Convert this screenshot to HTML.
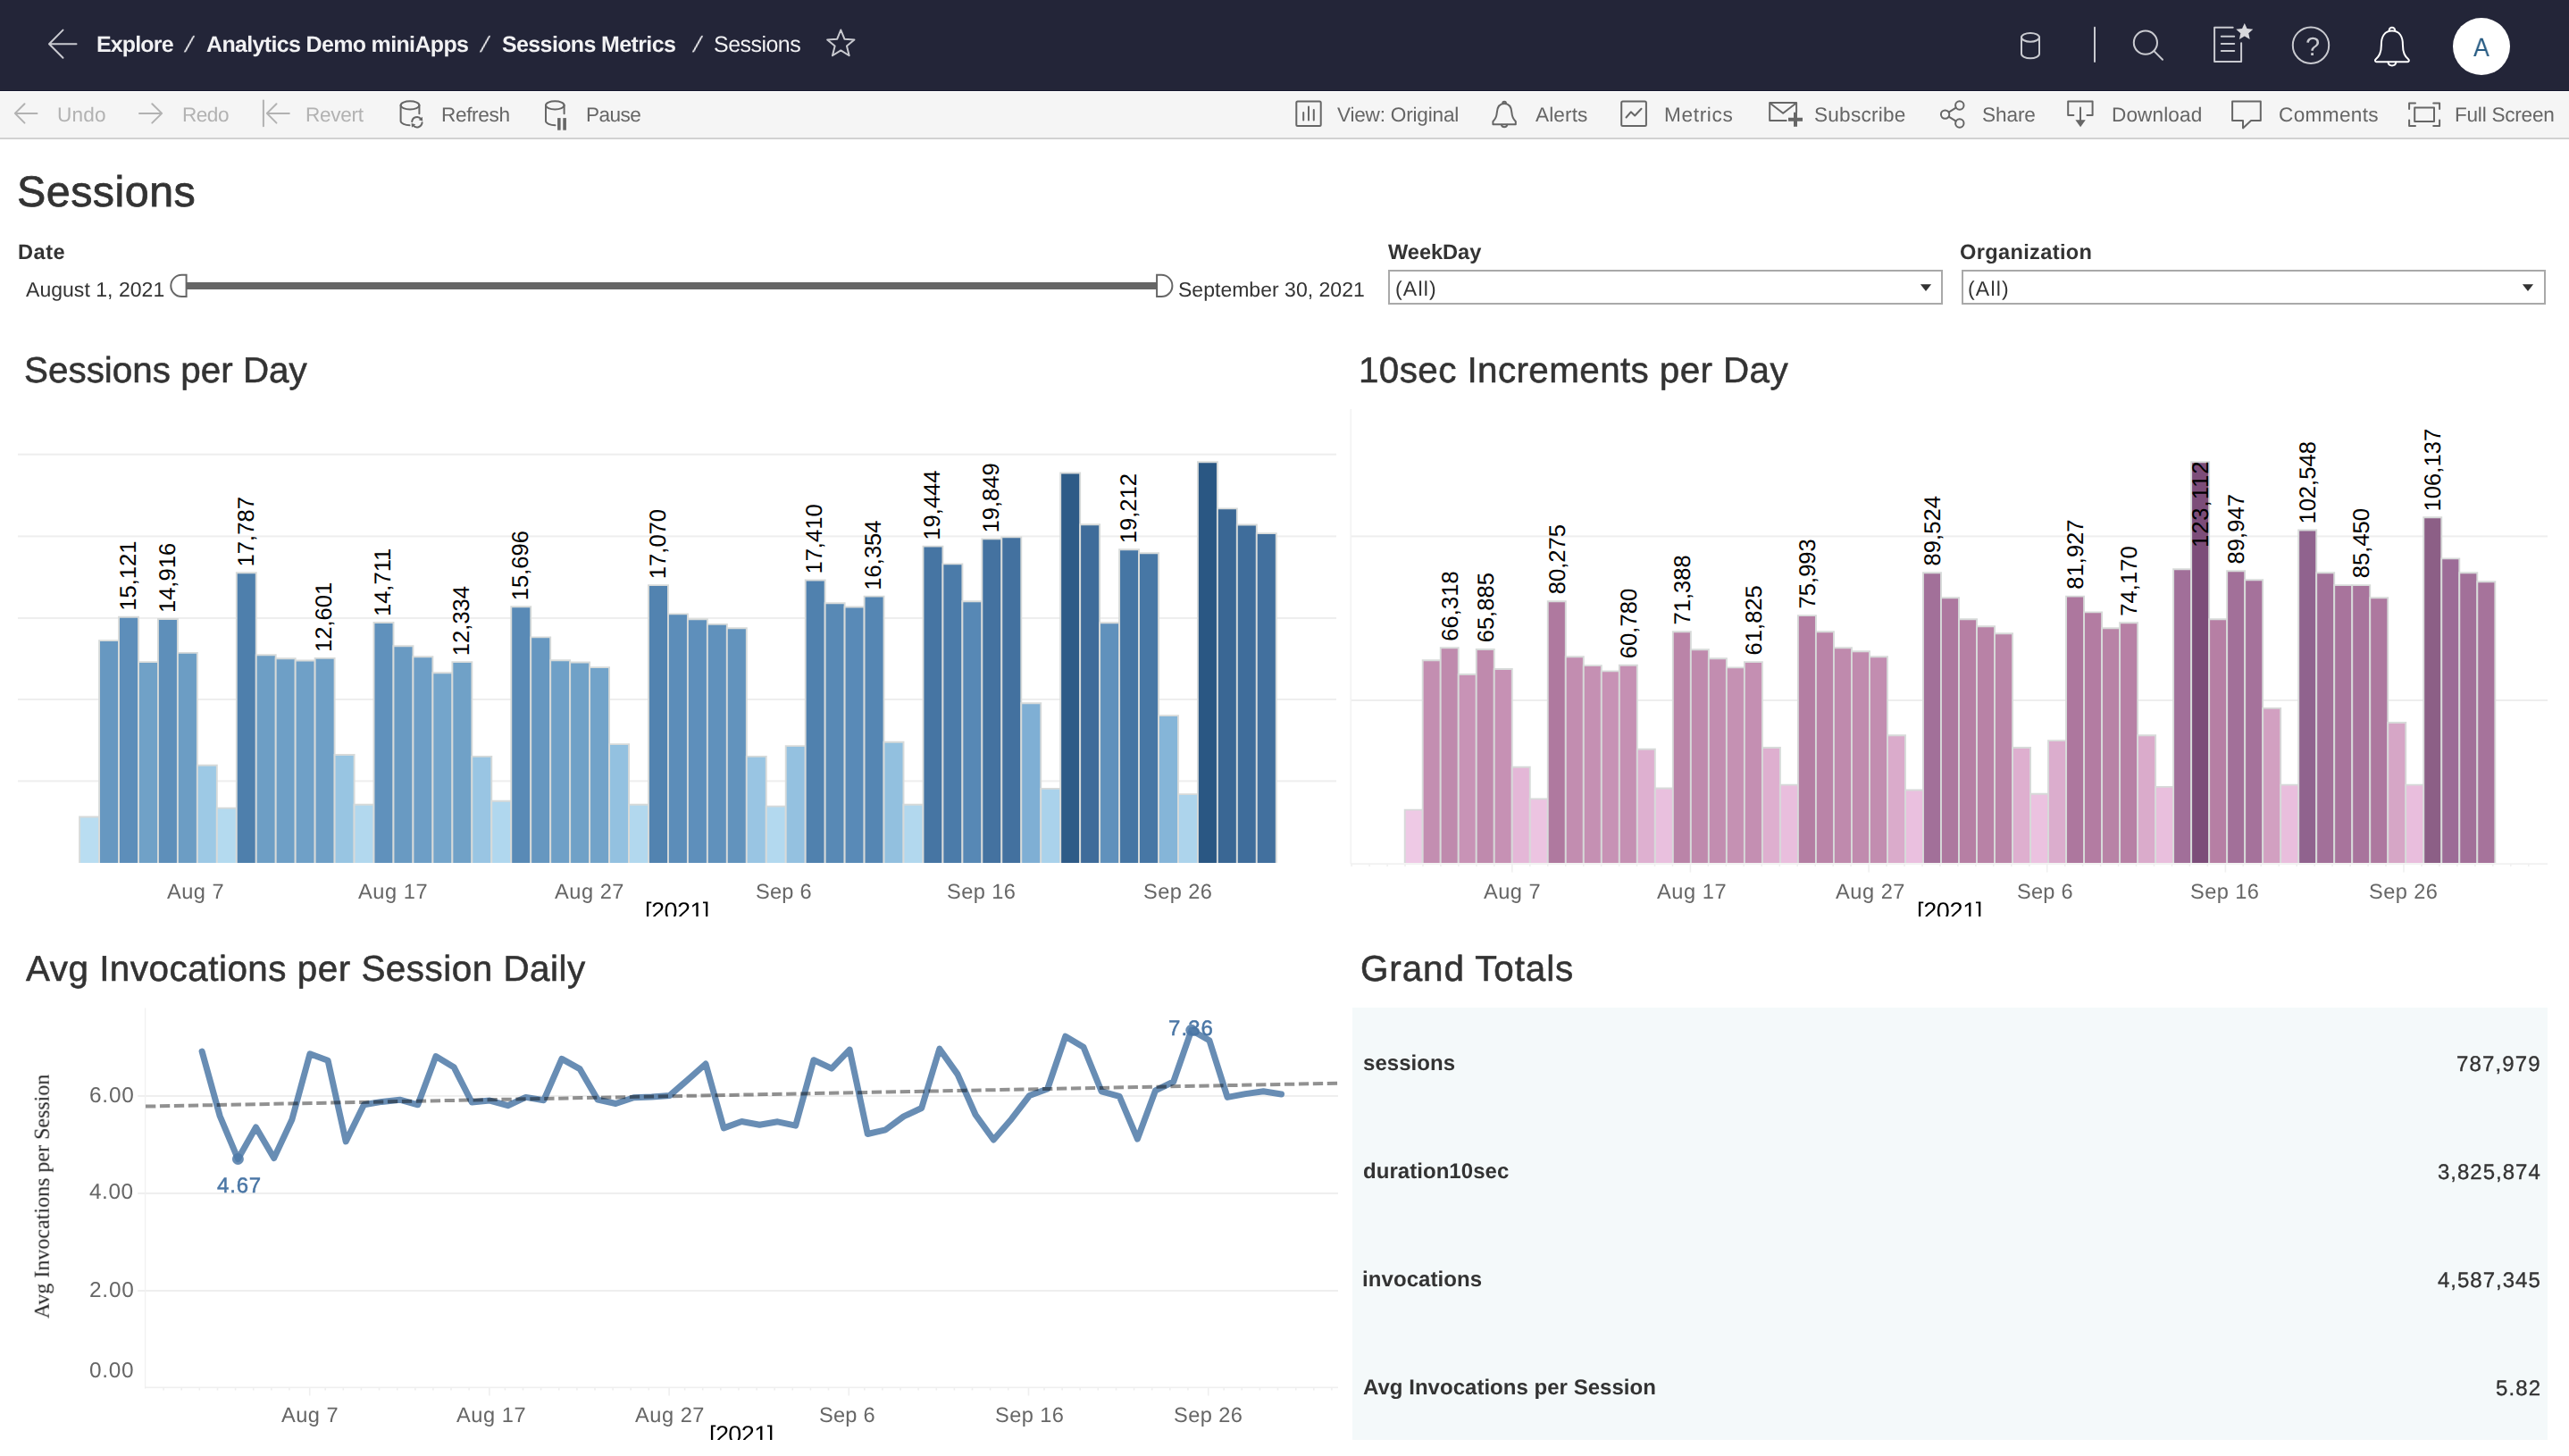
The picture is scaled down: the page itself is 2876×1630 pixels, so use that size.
<!DOCTYPE html>
<html lang="en"><head><meta charset="utf-8"><title>Sessions</title>
<style>
html,body{margin:0;padding:0;background:#fff;}
body{width:2876px;height:1630px;position:relative;overflow:hidden;font-family:"Liberation Sans",sans-serif;text-rendering:geometricPrecision;}
.t{position:absolute;white-space:nowrap;line-height:1;will-change:transform;}
.r{position:absolute;display:block;}
svg{overflow:visible;}
</style></head><body>
<div class="r" style="left:0.00px;top:0.00px;width:2876.00px;height:101.00px;background:#232538;"></div>
<div class="r" style="left:0.00px;top:100.70px;width:2876.00px;height:1.30px;background:#191b31;"></div>
<div class="r" style="left:0.00px;top:102.00px;width:2876.00px;height:1.20px;background:#ffffff;"></div>
<div class="r" style="left:0.00px;top:103.20px;width:2876.00px;height:51.00px;background:#f5f5f5;"></div>
<div class="r" style="left:0.00px;top:154.00px;width:2876.00px;height:2.00px;background:#d1d1d1;"></div>
<svg class="r" style="left:0.00px;top:0.00px;" width="1000.00" height="102.00" viewBox="0.00 0.00 1000.00 102.00">
<g fill="none" stroke="#c9cad0" stroke-width="2" stroke-linecap="round" stroke-linejoin="round">
<path d="M85.5 49.2H55.5M70.5 33.6L55 49.2L70.5 64.8"/>
<path d="M941.30 33.50L945.41 43.74L956.42 44.49L947.96 51.56L950.65 62.26L941.30 56.40L931.95 62.26L934.64 51.56L926.18 44.49L937.19 43.74z"/>
</g></svg>
<div class="t" style="left:107.50px;top:38.00px;font-size:25.00px;color:#f1f1f3;font-weight:700;letter-spacing:-0.858px;">Explore</div>
<div class="t" style="left:230.70px;top:38.00px;font-size:25.00px;color:#f1f1f3;font-weight:700;letter-spacing:-0.659px;">Analytics Demo miniApps</div>
<div class="t" style="left:561.55px;top:38.00px;font-size:25.00px;color:#f1f1f3;font-weight:700;letter-spacing:-0.627px;">Sessions Metrics</div>
<div class="t" style="left:799.05px;top:38.00px;font-size:25.00px;color:#f1f1f3;letter-spacing:-0.529px;">Sessions</div>
<div class="t" style="left:206.30px;top:38.00px;font-size:25px;color:#f1f1f3;transform:skewX(-16deg);transform-origin:0 20.0px;">/</div>
<div class="t" style="left:537.00px;top:38.00px;font-size:25px;color:#f1f1f3;transform:skewX(-16deg);transform-origin:0 20.0px;">/</div>
<div class="t" style="left:774.60px;top:38.00px;font-size:25px;color:#f1f1f3;transform:skewX(-16deg);transform-origin:0 20.0px;">/</div>
<svg class="r" style="left:2200.00px;top:0.00px;" width="676.00" height="102.00" viewBox="2200.00 0.00 676.00 102.00">
<g fill="none" stroke="#c9cad0" stroke-width="2" stroke-linecap="round" stroke-linejoin="round">
<path d="M2263 41.800v18.500c0 2.700 4.500 5 10 5s10-2.300 10-5v-18.500"/>
<ellipse cx="2273" cy="41.800" rx="10" ry="4.900"/>
<path d="M2345 30.800V69"/>
<circle cx="2401.9" cy="47.700" r="13.100"/><path d="M2411.400 57.100L2421 66.700"/>
<path d="M2499.700 30.800H2479.100V68.900H2509.100V48.200"/>
<path d="M2486.800 40.800H2501.200M2486.800 49H2501.200M2486.800 57H2501.200"/>
<circle cx="2587" cy="50.700" r="20.200"/>
</g>
<path fill="#d8d8dc" d="M2512.80 25.90L2515.56 32.10L2522.31 32.81L2517.27 37.35L2518.68 43.99L2512.80 40.60L2506.92 43.99L2508.33 37.35L2503.29 32.81L2510.04 32.10z"/>
<g fill="none" stroke="#ffffff" stroke-width="2" stroke-linecap="round" stroke-linejoin="round">
<path d="M2677.9 34.4c-8.6 0-12 7-12 15.500c0 9.500-2.600 13.200-6.400 16.700c-1 .9-.6 2.600 1 2.600h34.800c1.600 0 2-1.700 1-2.600c-3.800-3.500-6.400-7.200-6.400-16.700c0-8.500-3.400-15.500-12-15.500z"/>
<path d="M2674.6 34.300c0-2 1.400-3.600 3.300-3.600s3.300 1.600 3.300 3.600"/>
<path d="M2673.400 69.600c.4 2.300 2.200 3.800 4.500 3.800s4.100-1.500 4.500-3.800"/>
</g>
<circle cx="2778" cy="52" r="32" fill="#ffffff"/>
</svg>
<div class="t" style="left:2580.85px;top:39.00px;font-size:29.00px;color:#c9cad0;">?</div>
<div class="t" style="left:2769.20px;top:39.00px;font-size:29.40px;color:#265a82;transform:scaleX(0.91);transform-origin:0 0;">A</div>
<div class="t" style="left:63.65px;top:118.00px;font-size:22.60px;color:#b2b2b2;letter-spacing:0.183px;">Undo</div>
<div class="t" style="left:203.75px;top:118.00px;font-size:22.60px;color:#b2b2b2;letter-spacing:-0.517px;">Redo</div>
<div class="t" style="left:341.95px;top:118.00px;font-size:22.60px;color:#b2b2b2;letter-spacing:-0.320px;">Revert</div>
<div class="t" style="left:493.75px;top:118.00px;font-size:22.60px;color:#666666;letter-spacing:-0.350px;">Refresh</div>
<div class="t" style="left:655.75px;top:118.00px;font-size:22.60px;color:#666666;letter-spacing:-0.575px;">Pause</div>
<div class="t" style="left:1496.80px;top:118.00px;font-size:22.60px;color:#666666;letter-spacing:-0.208px;">View: Original</div>
<div class="t" style="left:1719.30px;top:118.00px;font-size:22.60px;color:#666666;letter-spacing:0.130px;">Alerts</div>
<div class="t" style="left:1863.05px;top:118.00px;font-size:22.60px;color:#666666;letter-spacing:0.667px;">Metrics</div>
<div class="t" style="left:2031.40px;top:118.00px;font-size:22.60px;color:#666666;letter-spacing:0.225px;">Subscribe</div>
<div class="t" style="left:2218.80px;top:118.00px;font-size:22.60px;color:#666666;letter-spacing:-0.100px;">Share</div>
<div class="t" style="left:2363.75px;top:118.00px;font-size:22.60px;color:#666666;letter-spacing:0.107px;">Download</div>
<div class="t" style="left:2550.50px;top:118.00px;font-size:22.60px;color:#666666;letter-spacing:0.343px;">Comments</div>
<div class="t" style="left:2747.95px;top:118.00px;font-size:22.60px;color:#666666;letter-spacing:-0.250px;">Full Screen</div>
<svg class="r" style="left:0.00px;top:102.00px;" width="760.00" height="54.00" viewBox="0.00 102.00 760.00 54.00">
<g fill="none" stroke="#b2b2b2" stroke-width="2" stroke-linecap="round" stroke-linejoin="round">
<path d="M41.5 126.9H17M27.5 116.2L16.8 126.9L27.5 137.600"/>
<path d="M156 126.9H181M170.300 116.2L181.200 126.9L170.300 137.600"/>
<path d="M294.9 112.500V141.300"/>
<path d="M323.800 126.9H299M309.500 116.2L298.800 126.9L309.500 137.600"/>
</g>
<g fill="none" stroke="#666666" stroke-width="2" stroke-linecap="round" stroke-linejoin="round">
<ellipse cx="459.0" cy="117.8" rx="10.4" ry="4.6"/><path d="M448.6 117.8V135.6c0 2.6 5.2 4.6 9.9 4.6"/><path d="M469.4 117.8V127.3"/>
<ellipse cx="621.3" cy="117.8" rx="10.3" ry="4.6"/><path d="M611.0 117.8V135.6c0 2.6 5.2 4.6 10.5 4.6"/><path d="M631.6 117.8V127.3"/>
<path d="M461.22 136.20A5.70 5.70 0 0 1 471.39 133.19"/>
<path d="M472.58 137.20A5.70 5.70 0 0 1 462.41 140.21"/>
</g>
<path fill="#666666" d="M473.23 135.38L472.80 130.64L468.64 134.13zM460.57 138.02L461.00 142.76L465.16 139.27z"/>
<rect x="624.1" y="132.100" width="3.500" height="13.600" fill="#666666"/><rect x="630.300" y="132.100" width="3.600" height="13.600" fill="#666666"/>
</svg>
<svg class="r" style="left:1440.00px;top:102.00px;" width="1436.00" height="54.00" viewBox="1440.00 102.00 1436.00 54.00">
<g fill="none" stroke="#666666" stroke-width="2" stroke-linecap="round" stroke-linejoin="round">
<rect x="1451.3" y="113.600" width="27.4" height="27.4" rx="1.5"/>
<path d="M1459.200 134.500V126M1465 134.500V119.500M1470.800 134.500V123"/>
<path d="M1684.100 116.100C1678.600 116.100 1676.200 120.600 1675.800 126C1675.400 131.500 1674.200 133.400 1671.400 135.900V139.200H1696.800V135.900C1694 133.400 1692.800 131.500 1692.400 126C1692 120.600 1689.600 116.100 1684.100 116.100z"/>
<path d="M1682.200 116c0-1.300.8-2.200 1.900-2.200s1.900.9 1.900 2.200"/>
<path d="M1680.900 139.800c.4 1.500 1.600 2.500 3.200 2.500s2.800-1 3.200-2.500"/>
<rect x="1815.200" y="113.600" width="27.700" height="27.400" rx="1.500"/>
<path d="M1820.500 131.500l5.300-6.200 4.400 4.200 7.300-7.700"/>
<path d="M2011.100 125.500V115.100H1981.200V134.900H1999.700"/>
<path d="M1981.600 115.500l14.550 11.300 14.550-11.300"/>
<circle cx="2193.800" cy="118" r="4.700"/><circle cx="2177.600" cy="128.100" r="4.700"/><circle cx="2193.800" cy="138" r="4.700"/>
<path d="M2181.700 125.600l8-5M2181.700 130.600l8 5"/>
<path d="M2321.400 128.900H2315.200V113.500H2342.600V128.900H2336.400"/>
<path d="M2329 120.500V135"/>
<path d="M2499.100 113.600H2530.800V135.100H2520L2511 143.400V135.100H2499.100z"/>
<rect x="2703.200" y="120.500" width="21.800" height="15.600"/>
<path d="M2697.100 122V115.500H2704M2724.200 115.500H2731.100V122M2731.100 134.600V141.100H2724.200M2704 141.100H2697.100V134.600"/>
</g>
<path fill="#666666" d="M2323.400 134.200h11.400l-5.700 8z"/>
<path fill="none" stroke="#666666" stroke-width="4" d="M2010 125.800V141.800M2002 133.800H2018"/>
</svg>
<div class="t" style="left:18.75px;top:191.00px;font-size:48.40px;color:#333333;letter-spacing:0.493px;-webkit-text-stroke:0.8px #333;">Sessions</div>
<div class="t" style="left:20.00px;top:272.00px;font-size:23.60px;color:#333333;font-weight:700;letter-spacing:0.500px;">Date</div>
<div class="t" style="left:1553.60px;top:272.00px;font-size:23.60px;color:#333333;font-weight:700;letter-spacing:-0.033px;">WeekDay</div>
<div class="t" style="left:2194.00px;top:272.00px;font-size:23.60px;color:#333333;font-weight:700;letter-spacing:0.341px;">Organization</div>
<div class="t" style="left:29.20px;top:313.00px;font-size:23.00px;color:#333333;letter-spacing:0.035px;">August 1, 2021</div>
<div class="t" style="left:1319.20px;top:313.00px;font-size:23.00px;color:#333333;letter-spacing:0.018px;">September 30, 2021</div>
<svg class="r" style="left:180.00px;top:300.00px;" width="1150.00" height="40.00" viewBox="180.00 300.00 1150.00 40.00">
<rect x="209" y="316" width="1086" height="8" fill="#666"/>
<path d="M208.600 307.800h-5.200a12.100 12.100 0 0 0 0 24.200h5.200z" fill="#fff" stroke="#666" stroke-width="2"/>
<path d="M1295.100 307.800h5.200a12.100 12.100 0 0 1 0 24.200h-5.200z" fill="#fff" stroke="#666" stroke-width="2"/>
</svg>
<div class="r" style="left:1554.40px;top:302.4px;width:621.10px;height:38.90px;border:2px solid #a9a9a9;box-sizing:border-box;background:#fff"></div>
<div class="t" style="left:1561.75px;top:312.00px;font-size:23.00px;color:#333333;letter-spacing:1.188px;">(All)</div>
<svg class="r" style="left:2147.90px;top:316.00px;" width="16.00" height="12.00" viewBox="2147.90 316.00 16.00 12.00"><path d="M2149.8 318.200h12.200l-6.100 7.900z" fill="#333"/></svg>
<div class="r" style="left:2196.10px;top:302.4px;width:653.60px;height:38.90px;border:2px solid #a9a9a9;box-sizing:border-box;background:#fff"></div>
<div class="t" style="left:2203.45px;top:312.00px;font-size:23.00px;color:#333333;letter-spacing:1.188px;">(All)</div>
<svg class="r" style="left:2822.10px;top:316.00px;" width="16.00" height="12.00" viewBox="2822.10 316.00 16.00 12.00"><path d="M2824.0 318.200h12.200l-6.100 7.900z" fill="#333"/></svg>
<div class="t" style="left:27.45px;top:394.00px;font-size:40.40px;color:#333333;letter-spacing:0.017px;-webkit-text-stroke:0.55px #333;">Sessions per Day</div>
<div class="t" style="left:1521.00px;top:394.00px;font-size:40.40px;color:#333333;letter-spacing:0.402px;-webkit-text-stroke:0.55px #333;">10sec Increments per Day</div>
<div class="t" style="left:29.20px;top:1064.00px;font-size:40.40px;color:#333333;letter-spacing:0.509px;-webkit-text-stroke:0.55px #333;">Avg Invocations per Session Daily</div>
<div class="t" style="left:1522.50px;top:1064.00px;font-size:40.40px;color:#333333;letter-spacing:0.909px;-webkit-text-stroke:0.55px #333;">Grand Totals</div>
<svg class="r" style="left:0.00px;top:440.00px;font-family:&quot;Liberation Sans&quot;,sans-serif;" width="1510.00" height="540.00" viewBox="0.00 440.00 1510.00 540.00"><rect x="20" y="507.7" width="1476" height="2" fill="#eeeeee"/><rect x="20" y="599.4" width="1476" height="2" fill="#eeeeee"/><rect x="20" y="691.0" width="1476" height="2" fill="#eeeeee"/><rect x="20" y="782.0" width="1476" height="2" fill="#eeeeee"/><rect x="20" y="873.4" width="1476" height="2" fill="#eeeeee"/><g stroke="#d7dad9" stroke-width="1.9"><path d="M89.10 966.00V914.50H111.06V966.00" fill="#b9ddf1"/><path d="M111.06 966.00V717.10H133.02V966.00" fill="#6798c1"/><path d="M133.02 966.00V690.70H154.99V966.00" fill="#5d8eba"/><path d="M154.99 966.00V741.10H176.95V966.00" fill="#70a1c7"/><path d="M176.95 966.00V693.00H198.91V966.00" fill="#5e8fba"/><path d="M198.91 966.00V730.90H220.87V966.00" fill="#6c9dc4"/><path d="M220.87 966.00V856.80H242.83V966.00" fill="#9dc9e5"/><path d="M242.83 966.00V904.60H264.80V966.00" fill="#b4daef"/><path d="M264.80 966.00V641.30H286.76V966.00" fill="#4e7fac"/><path d="M286.76 966.00V733.20H308.72V966.00" fill="#6d9ec5"/><path d="M308.72 966.00V737.20H330.68V966.00" fill="#6e9fc6"/><path d="M330.68 966.00V739.50H352.64V966.00" fill="#6fa0c7"/><path d="M352.64 966.00V736.90H374.61V966.00" fill="#6e9fc6"/><path d="M374.61 966.00V845.00H396.57V966.00" fill="#98c5e2"/><path d="M396.57 966.00V900.70H418.53V966.00" fill="#b2d8ee"/><path d="M418.53 966.00V697.00H440.49V966.00" fill="#6091bc"/><path d="M440.49 966.00V723.30H462.45V966.00" fill="#699ac2"/><path d="M462.45 966.00V735.20H484.42V966.00" fill="#6d9ec6"/><path d="M484.42 966.00V753.30H506.38V966.00" fill="#74a5cb"/><path d="M506.38 966.00V741.10H528.34V966.00" fill="#70a1c7"/><path d="M528.34 966.00V846.90H550.30V966.00" fill="#99c5e3"/><path d="M550.30 966.00V896.70H572.26V966.00" fill="#b0d7ee"/><path d="M572.26 966.00V679.20H594.23V966.00" fill="#598ab6"/><path d="M594.23 966.00V713.40H616.19V966.00" fill="#6697c0"/><path d="M616.19 966.00V739.20H638.15V966.00" fill="#6fa0c7"/><path d="M638.15 966.00V741.50H660.11V966.00" fill="#70a1c7"/><path d="M660.11 966.00V747.10H682.07V966.00" fill="#72a3c9"/><path d="M682.07 966.00V833.10H704.04V966.00" fill="#93c1e0"/><path d="M704.04 966.00V900.70H726.00V966.00" fill="#b2d8ee"/><path d="M726.00 966.00V655.10H747.96V966.00" fill="#5283b0"/><path d="M747.96 966.00V687.40H769.92V966.00" fill="#5c8db9"/><path d="M769.92 966.00V693.30H791.88V966.00" fill="#5e8fbb"/><path d="M791.88 966.00V698.90H813.85V966.00" fill="#6091bc"/><path d="M813.85 966.00V703.20H835.81V966.00" fill="#6293bd"/><path d="M835.81 966.00V846.90H857.77V966.00" fill="#99c5e3"/><path d="M857.77 966.00V902.60H879.73V966.00" fill="#b3d9ef"/><path d="M879.73 966.00V835.10H901.69V966.00" fill="#94c1e0"/><path d="M901.69 966.00V649.50H923.66V966.00" fill="#5081ae"/><path d="M923.66 966.00V675.20H945.62V966.00" fill="#5889b5"/><path d="M945.62 966.00V679.50H967.58V966.00" fill="#598ab7"/><path d="M967.58 966.00V667.60H989.54V966.00" fill="#5586b3"/><path d="M989.54 966.00V830.80H1011.50V966.00" fill="#92c0df"/><path d="M1011.50 966.00V900.70H1033.47V966.00" fill="#b2d8ee"/><path d="M1033.47 966.00V611.60H1055.43V966.00" fill="#4675a3"/><path d="M1055.43 966.00V631.40H1077.39V966.00" fill="#4b7ba9"/><path d="M1077.39 966.00V673.20H1099.35V966.00" fill="#5788b5"/><path d="M1099.35 966.00V603.40H1121.31V966.00" fill="#4472a0"/><path d="M1121.31 966.00V601.40H1143.28V966.00" fill="#43719f"/><path d="M1143.28 966.00V787.30H1165.24V966.00" fill="#7fafd4"/><path d="M1165.24 966.00V882.90H1187.20V966.00" fill="#aad2eb"/><path d="M1187.20 966.00V529.50H1209.16V966.00" fill="#2e5b87"/><path d="M1209.16 966.00V587.20H1231.12V966.00" fill="#3f6c9a"/><path d="M1231.12 966.00V697.30H1253.09V966.00" fill="#6091bc"/><path d="M1253.09 966.00V615.20H1275.05V966.00" fill="#4676a4"/><path d="M1275.05 966.00V619.20H1297.01V966.00" fill="#4777a5"/><path d="M1297.01 966.00V801.10H1318.97V966.00" fill="#85b5d8"/><path d="M1318.97 966.00V889.10H1340.93V966.00" fill="#add4ec"/><path d="M1340.93 966.00V517.30H1362.90V966.00" fill="#2a5783"/><path d="M1362.90 966.00V569.40H1384.86V966.00" fill="#3a6794"/><path d="M1384.86 966.00V587.50H1406.82V966.00" fill="#3f6d9b"/><path d="M1406.82 966.00V597.10H1428.78V966.00" fill="#42709e"/></g><g font-size="25.6" fill="#000"><text transform="translate(151.80 683.80) rotate(-90)">15,121</text><text transform="translate(195.73 686.10) rotate(-90)">14,916</text><text transform="translate(283.58 634.40) rotate(-90)">17,787</text><text transform="translate(371.42 730.00) rotate(-90)">12,601</text><text transform="translate(437.31 690.10) rotate(-90)">14,711</text><text transform="translate(525.16 734.20) rotate(-90)">12,334</text><text transform="translate(591.05 672.30) rotate(-90)">15,696</text><text transform="translate(744.78 648.20) rotate(-90)">17,070</text><text transform="translate(920.48 642.60) rotate(-90)">17,410</text><text transform="translate(986.36 660.70) rotate(-90)">16,354</text><text transform="translate(1052.25 604.70) rotate(-90)">19,444</text><text transform="translate(1118.13 596.50) rotate(-90)">19,849</text><text transform="translate(1271.87 608.30) rotate(-90)">19,212</text></g></svg>
<svg class="r" style="left:1505.00px;top:440.00px;font-family:&quot;Liberation Sans&quot;,sans-serif;" width="1371.00" height="540.00" viewBox="1505.00 440.00 1371.00 540.00"><rect x="1512" y="599.4" width="1340" height="2" fill="#eeeeee"/><rect x="1512" y="783.0" width="1340" height="2" fill="#eeeeee"/><rect x="1511.5" y="458" width="1.6" height="509" fill="#f2f2f2"/><rect x="1512" y="966.3" width="1340" height="1.6" fill="#f0f0f0"/><rect x="1512.3" y="967.6" width="1.6" height="2.5" fill="#f0f0f0"/><rect x="1532.3" y="967.6" width="1.6" height="2.5" fill="#f0f0f0"/><rect x="1552.3" y="967.6" width="1.6" height="2.5" fill="#f0f0f0"/><rect x="1572.2" y="967.6" width="1.6" height="2.5" fill="#f0f0f0"/><rect x="1592.2" y="967.6" width="1.6" height="2.5" fill="#f0f0f0"/><rect x="1612.1" y="967.6" width="1.6" height="2.5" fill="#f0f0f0"/><rect x="1632.1" y="967.6" width="1.6" height="2.5" fill="#f0f0f0"/><rect x="1652.1" y="967.6" width="1.6" height="2.5" fill="#f0f0f0"/><rect x="1672.0" y="967.6" width="1.6" height="2.5" fill="#f0f0f0"/><rect x="1692.0" y="967.6" width="1.6" height="9.0" fill="#f0f0f0"/><rect x="1712.0" y="967.6" width="1.6" height="2.5" fill="#f0f0f0"/><rect x="1731.9" y="967.6" width="1.6" height="2.5" fill="#f0f0f0"/><rect x="1751.9" y="967.6" width="1.6" height="2.5" fill="#f0f0f0"/><rect x="1771.9" y="967.6" width="1.6" height="2.5" fill="#f0f0f0"/><rect x="1791.8" y="967.6" width="1.6" height="2.5" fill="#f0f0f0"/><rect x="1811.8" y="967.6" width="1.6" height="2.5" fill="#f0f0f0"/><rect x="1831.7" y="967.6" width="1.6" height="2.5" fill="#f0f0f0"/><rect x="1851.7" y="967.6" width="1.6" height="2.5" fill="#f0f0f0"/><rect x="1871.7" y="967.6" width="1.6" height="2.5" fill="#f0f0f0"/><rect x="1891.6" y="967.6" width="1.6" height="9.0" fill="#f0f0f0"/><rect x="1911.6" y="967.6" width="1.6" height="2.5" fill="#f0f0f0"/><rect x="1931.6" y="967.6" width="1.6" height="2.5" fill="#f0f0f0"/><rect x="1951.5" y="967.6" width="1.6" height="2.5" fill="#f0f0f0"/><rect x="1971.5" y="967.6" width="1.6" height="2.5" fill="#f0f0f0"/><rect x="1991.5" y="967.6" width="1.6" height="2.5" fill="#f0f0f0"/><rect x="2011.4" y="967.6" width="1.6" height="2.5" fill="#f0f0f0"/><rect x="2031.4" y="967.6" width="1.6" height="2.5" fill="#f0f0f0"/><rect x="2051.4" y="967.6" width="1.6" height="2.5" fill="#f0f0f0"/><rect x="2071.3" y="967.6" width="1.6" height="2.5" fill="#f0f0f0"/><rect x="2091.3" y="967.6" width="1.6" height="9.0" fill="#f0f0f0"/><rect x="2111.2" y="967.6" width="1.6" height="2.5" fill="#f0f0f0"/><rect x="2131.2" y="967.6" width="1.6" height="2.5" fill="#f0f0f0"/><rect x="2151.2" y="967.6" width="1.6" height="2.5" fill="#f0f0f0"/><rect x="2171.1" y="967.6" width="1.6" height="2.5" fill="#f0f0f0"/><rect x="2191.1" y="967.6" width="1.6" height="2.5" fill="#f0f0f0"/><rect x="2211.1" y="967.6" width="1.6" height="2.5" fill="#f0f0f0"/><rect x="2231.0" y="967.6" width="1.6" height="2.5" fill="#f0f0f0"/><rect x="2251.0" y="967.6" width="1.6" height="2.5" fill="#f0f0f0"/><rect x="2271.0" y="967.6" width="1.6" height="2.5" fill="#f0f0f0"/><rect x="2290.9" y="967.6" width="1.6" height="9.0" fill="#f0f0f0"/><rect x="2310.9" y="967.6" width="1.6" height="2.5" fill="#f0f0f0"/><rect x="2330.8" y="967.6" width="1.6" height="2.5" fill="#f0f0f0"/><rect x="2350.8" y="967.6" width="1.6" height="2.5" fill="#f0f0f0"/><rect x="2370.8" y="967.6" width="1.6" height="2.5" fill="#f0f0f0"/><rect x="2390.7" y="967.6" width="1.6" height="2.5" fill="#f0f0f0"/><rect x="2410.7" y="967.6" width="1.6" height="2.5" fill="#f0f0f0"/><rect x="2430.7" y="967.6" width="1.6" height="2.5" fill="#f0f0f0"/><rect x="2450.6" y="967.6" width="1.6" height="2.5" fill="#f0f0f0"/><rect x="2470.6" y="967.6" width="1.6" height="2.5" fill="#f0f0f0"/><rect x="2490.6" y="967.6" width="1.6" height="9.0" fill="#f0f0f0"/><rect x="2510.5" y="967.6" width="1.6" height="2.5" fill="#f0f0f0"/><rect x="2530.5" y="967.6" width="1.6" height="2.5" fill="#f0f0f0"/><rect x="2550.5" y="967.6" width="1.6" height="2.5" fill="#f0f0f0"/><rect x="2570.4" y="967.6" width="1.6" height="2.5" fill="#f0f0f0"/><rect x="2590.4" y="967.6" width="1.6" height="2.5" fill="#f0f0f0"/><rect x="2610.3" y="967.6" width="1.6" height="2.5" fill="#f0f0f0"/><rect x="2630.3" y="967.6" width="1.6" height="2.5" fill="#f0f0f0"/><rect x="2650.3" y="967.6" width="1.6" height="2.5" fill="#f0f0f0"/><rect x="2670.2" y="967.6" width="1.6" height="2.5" fill="#f0f0f0"/><rect x="2690.2" y="967.6" width="1.6" height="9.0" fill="#f0f0f0"/><rect x="2710.2" y="967.6" width="1.6" height="2.5" fill="#f0f0f0"/><rect x="2730.1" y="967.6" width="1.6" height="2.5" fill="#f0f0f0"/><rect x="2750.1" y="967.6" width="1.6" height="2.5" fill="#f0f0f0"/><rect x="2770.1" y="967.6" width="1.6" height="2.5" fill="#f0f0f0"/><rect x="2790.0" y="967.6" width="1.6" height="2.5" fill="#f0f0f0"/><rect x="2810.0" y="967.6" width="1.6" height="2.5" fill="#f0f0f0"/><rect x="2829.9" y="967.6" width="1.6" height="2.5" fill="#f0f0f0"/><g stroke="#d7dad9" stroke-width="1.9"><path d="M1572.70 966.00V906.60H1592.71V966.00" fill="#eec9e5"/><path d="M1592.71 966.00V739.20H1612.72V966.00" fill="#c38eb1"/><path d="M1612.72 966.00V725.30H1632.73V966.00" fill="#bf8aad"/><path d="M1632.73 966.00V755.00H1652.74V966.00" fill="#c893b6"/><path d="M1652.74 966.00V727.00H1672.75V966.00" fill="#bf8aad"/><path d="M1672.75 966.00V749.00H1692.76V966.00" fill="#c691b4"/><path d="M1692.76 966.00V858.80H1712.77V966.00" fill="#e4b7d7"/><path d="M1712.77 966.00V894.40H1732.78V966.00" fill="#ecc4e1"/><path d="M1732.78 966.00V673.20H1752.79V966.00" fill="#af799f"/><path d="M1752.79 966.00V735.20H1772.80V966.00" fill="#c28db0"/><path d="M1772.80 966.00V745.10H1792.81V966.00" fill="#c590b3"/><path d="M1792.81 966.00V751.40H1812.82V966.00" fill="#c792b5"/><path d="M1812.82 966.00V744.80H1832.83V966.00" fill="#c590b3"/><path d="M1832.83 966.00V838.70H1852.84V966.00" fill="#deb0d0"/><path d="M1852.84 966.00V882.50H1872.85V966.00" fill="#e9c0de"/><path d="M1872.85 966.00V707.20H1892.86V966.00" fill="#ba84a8"/><path d="M1892.86 966.00V727.30H1912.87V966.00" fill="#bf8aad"/><path d="M1912.87 966.00V737.20H1932.88V966.00" fill="#c28db0"/><path d="M1932.88 966.00V747.40H1952.89V966.00" fill="#c591b3"/><path d="M1952.89 966.00V741.10H1972.90V966.00" fill="#c48fb2"/><path d="M1972.90 966.00V837.00H1992.91V966.00" fill="#deafcf"/><path d="M1992.91 966.00V878.60H2012.92V966.00" fill="#e9bedd"/><path d="M2012.92 966.00V689.10H2032.93V966.00" fill="#b47ea3"/><path d="M2032.93 966.00V707.20H2052.94V966.00" fill="#ba84a8"/><path d="M2052.94 966.00V725.30H2072.95V966.00" fill="#bf8aad"/><path d="M2072.95 966.00V729.30H2092.96V966.00" fill="#c08bae"/><path d="M2092.96 966.00V735.20H2112.97V966.00" fill="#c28db0"/><path d="M2112.97 966.00V823.20H2132.98V966.00" fill="#daabcb"/><path d="M2132.98 966.00V884.50H2152.99V966.00" fill="#eac0df"/><path d="M2152.99 966.00V641.30H2173.00V966.00" fill="#a27099"/><path d="M2173.00 966.00V669.30H2193.01V966.00" fill="#ad789f"/><path d="M2193.01 966.00V693.30H2213.02V966.00" fill="#b67fa4"/><path d="M2213.02 966.00V701.30H2233.03V966.00" fill="#b882a6"/><path d="M2233.03 966.00V709.20H2253.04V966.00" fill="#ba85a8"/><path d="M2253.04 966.00V837.00H2273.05V966.00" fill="#deafcf"/><path d="M2273.05 966.00V888.80H2293.06V966.00" fill="#ebc2e0"/><path d="M2293.06 966.00V829.10H2313.07V966.00" fill="#dbadcd"/><path d="M2313.07 966.00V667.60H2333.08V966.00" fill="#ad779e"/><path d="M2333.08 966.00V685.40H2353.09V966.00" fill="#b37ca2"/><path d="M2353.09 966.00V703.20H2373.10V966.00" fill="#b883a6"/><path d="M2373.10 966.00V697.30H2393.11V966.00" fill="#b780a5"/><path d="M2393.11 966.00V823.20H2413.12V966.00" fill="#daabcb"/><path d="M2413.12 966.00V880.90H2433.13V966.00" fill="#e9bfdd"/><path d="M2433.13 966.00V637.30H2453.14V966.00" fill="#a16f99"/><path d="M2453.14 966.00V517.30H2473.15V966.00" fill="#7c4d79"/><path d="M2473.15 966.00V693.30H2493.16V966.00" fill="#b67fa4"/><path d="M2493.16 966.00V639.30H2513.17V966.00" fill="#a27099"/><path d="M2513.17 966.00V649.20H2533.18V966.00" fill="#a5729b"/><path d="M2533.18 966.00V792.90H2553.19V966.00" fill="#d2a0c1"/><path d="M2553.19 966.00V878.60H2573.20V966.00" fill="#e9bedd"/><path d="M2573.20 966.00V593.50H2593.21V966.00" fill="#90638e"/><path d="M2593.21 966.00V641.30H2613.22V966.00" fill="#a27099"/><path d="M2613.22 966.00V655.10H2633.23V966.00" fill="#a8749c"/><path d="M2633.23 966.00V655.10H2653.24V966.00" fill="#a8749c"/><path d="M2653.24 966.00V669.30H2673.25V966.00" fill="#ad789f"/><path d="M2673.25 966.00V809.00H2693.26V966.00" fill="#d6a6c6"/><path d="M2693.26 966.00V878.60H2713.27V966.00" fill="#e9bedd"/><path d="M2713.27 966.00V579.30H2733.28V966.00" fill="#8c5f86"/><path d="M2733.28 966.00V625.40H2753.29V966.00" fill="#9c6c97"/><path d="M2753.29 966.00V641.30H2773.30V966.00" fill="#a27099"/><path d="M2773.30 966.00V651.20H2793.31V966.00" fill="#a6739b"/></g><g font-size="25.6" fill="#000"><text transform="translate(1631.73 717.65) rotate(-90)">66,318</text><text transform="translate(1671.75 719.35) rotate(-90)">65,885</text><text transform="translate(1751.79 665.30) rotate(-90)">80,275</text><text transform="translate(1831.83 737.15) rotate(-90)">60,780</text><text transform="translate(1891.86 699.55) rotate(-90)">71,388</text><text transform="translate(1971.90 733.45) rotate(-90)">61,825</text><text transform="translate(2031.93 681.45) rotate(-90)">75,993</text><text transform="translate(2172.00 633.40) rotate(-90)">89,524</text><text transform="translate(2332.08 659.70) rotate(-90)">81,927</text><text transform="translate(2392.11 689.65) rotate(-90)">74,170</text><text transform="translate(2472.14 613.10) rotate(-90)" letter-spacing="1">123,112</text><text transform="translate(2512.17 631.40) rotate(-90)">89,947</text><text transform="translate(2592.21 586.60) rotate(-90)">102,548</text><text transform="translate(2652.24 647.20) rotate(-90)">85,450</text><text transform="translate(2732.28 572.40) rotate(-90)">106,137</text></g></svg>
<div class="t" style="left:187.00px;top:988.00px;font-size:23.60px;color:#666666;letter-spacing:0.487px;">Aug 7</div>
<div class="t" style="left:401.20px;top:988.00px;font-size:23.60px;color:#666666;letter-spacing:0.580px;">Aug 17</div>
<div class="t" style="left:621.40px;top:988.00px;font-size:23.60px;color:#666666;letter-spacing:0.540px;">Aug 27</div>
<div class="t" style="left:845.60px;top:988.00px;font-size:23.60px;color:#666666;letter-spacing:0.238px;">Sep 6</div>
<div class="t" style="left:1059.70px;top:988.00px;font-size:23.60px;color:#666666;letter-spacing:0.420px;">Sep 16</div>
<div class="t" style="left:1279.70px;top:988.00px;font-size:23.60px;color:#666666;letter-spacing:0.420px;">Sep 26</div>
<div class="t" style="left:1660.90px;top:988.00px;font-size:23.60px;color:#666666;letter-spacing:0.487px;">Aug 7</div>
<div class="t" style="left:1855.20px;top:988.00px;font-size:23.60px;color:#666666;letter-spacing:0.580px;">Aug 17</div>
<div class="t" style="left:2054.90px;top:988.00px;font-size:23.60px;color:#666666;letter-spacing:0.540px;">Aug 27</div>
<div class="t" style="left:2257.60px;top:988.00px;font-size:23.60px;color:#666666;letter-spacing:0.237px;">Sep 6</div>
<div class="t" style="left:2451.90px;top:988.00px;font-size:23.60px;color:#666666;letter-spacing:0.420px;">Sep 16</div>
<div class="t" style="left:2651.50px;top:988.00px;font-size:23.60px;color:#666666;letter-spacing:0.420px;">Sep 26</div>
<div class="t" style="left:315.10px;top:1574.00px;font-size:23.60px;color:#666666;letter-spacing:0.488px;">Aug 7</div>
<div class="t" style="left:511.20px;top:1574.00px;font-size:23.60px;color:#666666;letter-spacing:0.580px;">Aug 17</div>
<div class="t" style="left:711.40px;top:1574.00px;font-size:23.60px;color:#666666;letter-spacing:0.540px;">Aug 27</div>
<div class="t" style="left:917.40px;top:1574.00px;font-size:23.60px;color:#666666;letter-spacing:0.238px;">Sep 6</div>
<div class="t" style="left:1113.60px;top:1574.00px;font-size:23.60px;color:#666666;letter-spacing:0.420px;">Sep 16</div>
<div class="t" style="left:1313.70px;top:1574.00px;font-size:23.60px;color:#666666;letter-spacing:0.420px;">Sep 26</div>
<div class="r" style="left:717.4px;top:999.0px;width:80.8px;height:27.0px;overflow:hidden">
<div class="t" style="left:4.25px;top:8.00px;font-size:27px;color:#000;letter-spacing:-0.540px">[2021]</div>
</div>
<div class="r" style="left:2141.4px;top:999.0px;width:81.8px;height:27.0px;overflow:hidden">
<div class="t" style="left:4.25px;top:8.00px;font-size:27px;color:#000;letter-spacing:-0.340px">[2021]</div>
</div>
<div class="r" style="left:789.5px;top:1585.0px;width:80.6px;height:27.0px;overflow:hidden">
<div class="t" style="left:4.25px;top:8.00px;font-size:27px;color:#000;letter-spacing:-0.580px">[2021]</div>
</div>
<svg class="r" style="left:150.00px;top:1120.00px;" width="1360.00" height="450.00" viewBox="150.00 1120.00 1360.00 450.00"><rect x="154.2" y="1225.9" width="1343.800" height="2" fill="#eeeeee"/><rect x="154.2" y="1334.9" width="1343.800" height="2" fill="#eeeeee"/><rect x="154.2" y="1444.0" width="1343.800" height="2" fill="#eeeeee"/><rect x="161.900" y="1128.500" width="1.4" height="426" fill="#f1f1f1"/><rect x="162" y="1552.500" width="1336" height="1.6" fill="#efefef"/><rect x="345.9" y="1554" width="1.6" height="8.5" fill="#efefef"/><rect x="547.1" y="1554" width="1.6" height="8.5" fill="#efefef"/><rect x="748.3" y="1554" width="1.6" height="8.5" fill="#efefef"/><rect x="949.5" y="1554" width="1.6" height="8.5" fill="#efefef"/><rect x="1150.7" y="1554" width="1.6" height="8.5" fill="#efefef"/><rect x="1351.9" y="1554" width="1.6" height="8.5" fill="#efefef"/><rect x="182.3" y="1554" width="1.6" height="2.5" fill="#efefef"/><rect x="202.4" y="1554" width="1.6" height="2.5" fill="#efefef"/><rect x="222.5" y="1554" width="1.6" height="2.5" fill="#efefef"/><rect x="242.7" y="1554" width="1.6" height="2.5" fill="#efefef"/><rect x="262.8" y="1554" width="1.6" height="2.5" fill="#efefef"/><rect x="282.9" y="1554" width="1.6" height="2.5" fill="#efefef"/><rect x="303.0" y="1554" width="1.6" height="2.5" fill="#efefef"/><rect x="323.1" y="1554" width="1.6" height="2.5" fill="#efefef"/><rect x="363.4" y="1554" width="1.6" height="2.5" fill="#efefef"/><rect x="383.5" y="1554" width="1.6" height="2.5" fill="#efefef"/><rect x="403.6" y="1554" width="1.6" height="2.5" fill="#efefef"/><rect x="423.7" y="1554" width="1.6" height="2.5" fill="#efefef"/><rect x="443.9" y="1554" width="1.6" height="2.5" fill="#efefef"/><rect x="464.0" y="1554" width="1.6" height="2.5" fill="#efefef"/><rect x="484.1" y="1554" width="1.6" height="2.5" fill="#efefef"/><rect x="504.2" y="1554" width="1.6" height="2.5" fill="#efefef"/><rect x="524.3" y="1554" width="1.6" height="2.5" fill="#efefef"/><rect x="564.6" y="1554" width="1.6" height="2.5" fill="#efefef"/><rect x="584.7" y="1554" width="1.6" height="2.5" fill="#efefef"/><rect x="604.8" y="1554" width="1.6" height="2.5" fill="#efefef"/><rect x="624.9" y="1554" width="1.6" height="2.5" fill="#efefef"/><rect x="645.1" y="1554" width="1.6" height="2.5" fill="#efefef"/><rect x="665.2" y="1554" width="1.6" height="2.5" fill="#efefef"/><rect x="685.3" y="1554" width="1.6" height="2.5" fill="#efefef"/><rect x="705.4" y="1554" width="1.6" height="2.5" fill="#efefef"/><rect x="725.5" y="1554" width="1.6" height="2.5" fill="#efefef"/><rect x="765.8" y="1554" width="1.6" height="2.5" fill="#efefef"/><rect x="785.9" y="1554" width="1.6" height="2.5" fill="#efefef"/><rect x="806.0" y="1554" width="1.6" height="2.5" fill="#efefef"/><rect x="826.1" y="1554" width="1.6" height="2.5" fill="#efefef"/><rect x="846.3" y="1554" width="1.6" height="2.5" fill="#efefef"/><rect x="866.4" y="1554" width="1.6" height="2.5" fill="#efefef"/><rect x="886.5" y="1554" width="1.6" height="2.5" fill="#efefef"/><rect x="906.6" y="1554" width="1.6" height="2.5" fill="#efefef"/><rect x="926.7" y="1554" width="1.6" height="2.5" fill="#efefef"/><rect x="967.0" y="1554" width="1.6" height="2.5" fill="#efefef"/><rect x="987.1" y="1554" width="1.6" height="2.5" fill="#efefef"/><rect x="1007.2" y="1554" width="1.6" height="2.5" fill="#efefef"/><rect x="1027.3" y="1554" width="1.6" height="2.5" fill="#efefef"/><rect x="1047.5" y="1554" width="1.6" height="2.5" fill="#efefef"/><rect x="1067.6" y="1554" width="1.6" height="2.5" fill="#efefef"/><rect x="1087.7" y="1554" width="1.6" height="2.5" fill="#efefef"/><rect x="1107.8" y="1554" width="1.6" height="2.5" fill="#efefef"/><rect x="1127.9" y="1554" width="1.6" height="2.5" fill="#efefef"/><rect x="1168.2" y="1554" width="1.6" height="2.5" fill="#efefef"/><rect x="1188.3" y="1554" width="1.6" height="2.5" fill="#efefef"/><rect x="1208.4" y="1554" width="1.6" height="2.5" fill="#efefef"/><rect x="1228.5" y="1554" width="1.6" height="2.5" fill="#efefef"/><rect x="1248.7" y="1554" width="1.6" height="2.5" fill="#efefef"/><rect x="1268.8" y="1554" width="1.6" height="2.5" fill="#efefef"/><rect x="1288.9" y="1554" width="1.6" height="2.5" fill="#efefef"/><rect x="1309.0" y="1554" width="1.6" height="2.5" fill="#efefef"/><rect x="1329.1" y="1554" width="1.6" height="2.5" fill="#efefef"/><rect x="1369.4" y="1554" width="1.6" height="2.5" fill="#efefef"/><rect x="1389.5" y="1554" width="1.6" height="2.5" fill="#efefef"/><rect x="1409.6" y="1554" width="1.6" height="2.5" fill="#efefef"/><rect x="1429.7" y="1554" width="1.6" height="2.5" fill="#efefef"/><rect x="1449.9" y="1554" width="1.6" height="2.5" fill="#efefef"/><rect x="1470.0" y="1554" width="1.6" height="2.5" fill="#efefef"/><rect x="1490.1" y="1554" width="1.6" height="2.5" fill="#efefef"/><polyline points="226.1,1177.0 246.2,1249.5 266.4,1297.5 286.5,1262.0 306.7,1296.6 326.8,1253.6 346.9,1179.8 367.1,1187.3 387.2,1277.9 407.4,1236.8 427.5,1233.4 447.6,1231.2 467.8,1236.8 487.9,1182.6 508.1,1194.7 528.2,1234.0 548.3,1232.1 568.5,1237.7 588.6,1228.4 608.8,1231.7 628.9,1185.4 649.0,1196.6 669.2,1231.2 689.3,1235.5 709.5,1228.7 729.6,1228.0 749.7,1226.5 769.9,1208.8 790.0,1191.0 810.2,1262.9 830.3,1255.5 850.4,1259.2 870.6,1255.8 890.7,1260.1 910.9,1186.7 931.0,1196.2 951.1,1175.1 971.3,1269.5 991.4,1264.8 1011.6,1249.9 1031.7,1240.5 1051.8,1174.2 1072.0,1202.6 1092.1,1248.0 1112.3,1276.0 1132.4,1252.7 1152.5,1226.5 1172.7,1219.0 1192.8,1160.2 1213.0,1172.3 1233.1,1221.8 1253.2,1227.4 1273.4,1275.1 1293.5,1220.9 1313.7,1211.0 1333.8,1153.3 1353.9,1164.8 1374.1,1228.4 1394.2,1224.6 1414.4,1221.8 1434.5,1225.0" fill="none" stroke="rgba(78,121,167,0.85)" stroke-width="7" stroke-linejoin="round" stroke-linecap="round"/><circle cx="266.4" cy="1297.5" r="6.500" fill="rgba(78,121,167,0.85)"/><circle cx="1333.8" cy="1153.3" r="6.500" fill="rgba(78,121,167,0.85)"/><path d="M163 1238.600L1498 1212.700" stroke="rgba(0,0,0,0.43)" stroke-width="4" stroke-dasharray="11.3 4.64" fill="none"/></svg>
<div class="t" style="left:242.70px;top:1316.00px;font-size:24.00px;color:#4a76a5;letter-spacing:0.833px;-webkit-text-stroke:0.5px #4a76a5;">4.67</div>
<div class="t" style="left:1307.85px;top:1140.00px;font-size:24.00px;color:#4a76a5;letter-spacing:1.083px;-webkit-text-stroke:0.5px #4a76a5;">7.36</div>
<div class="t" style="left:99.65px;top:1215.00px;font-size:24.40px;color:#666666;letter-spacing:0.767px;">6.00</div>
<div class="t" style="left:100.40px;top:1323.00px;font-size:24.40px;color:#666666;letter-spacing:0.517px;">4.00</div>
<div class="t" style="left:99.65px;top:1433.00px;font-size:24.40px;color:#666666;letter-spacing:0.767px;">2.00</div>
<div class="t" style="left:99.90px;top:1523.00px;font-size:24.40px;color:#666666;letter-spacing:0.683px;">0.00</div>
<div class="t" style="left:0;top:0;font-family:'Liberation Serif',serif;font-size:24px;color:#222;transform:translate(47.700px,1476.2px) rotate(-90deg);transform-origin:0 0;line-height:0">Avg Invocations per Session</div>
<div class="r" style="left:1514.20px;top:1128.00px;width:1337.40px;height:483.60px;background:#f4f9fa;"></div>
<div class="t" style="left:1525.75px;top:1179.00px;font-size:24.00px;color:#333333;font-weight:700;letter-spacing:0.036px;">sessions</div>
<div class="t" style="left:1525.50px;top:1300.00px;font-size:24.00px;color:#333333;font-weight:700;letter-spacing:0.046px;">duration10sec</div>
<div class="t" style="left:1525.00px;top:1421.00px;font-size:24.00px;color:#333333;font-weight:700;letter-spacing:0.080px;">invocations</div>
<div class="t" style="left:1526.00px;top:1542.00px;font-size:24.00px;color:#333333;font-weight:700;letter-spacing:0.025px;">Avg Invocations per Session</div>
<div class="t" style="left:2750.15px;top:1180.00px;font-size:24.00px;color:#333333;letter-spacing:1.150px;-webkit-text-stroke:0.35px #333;">787,979</div>
<div class="t" style="left:2728.55px;top:1301.00px;font-size:24.00px;color:#333333;letter-spacing:1.000px;-webkit-text-stroke:0.35px #333;">3,825,874</div>
<div class="t" style="left:2728.80px;top:1422.00px;font-size:24.00px;color:#333333;letter-spacing:1.000px;-webkit-text-stroke:0.35px #333;">4,587,345</div>
<div class="t" style="left:2793.80px;top:1543.00px;font-size:24.00px;color:#333333;letter-spacing:1.167px;-webkit-text-stroke:0.35px #333;">5.82</div>
</body></html>
